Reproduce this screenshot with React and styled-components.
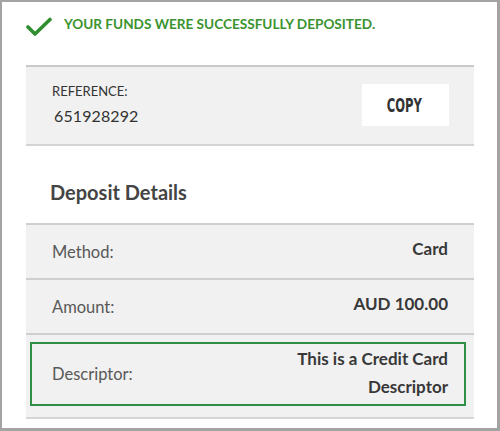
import React from 'react'
import styled, { createGlobalStyle } from 'styled-components'

const GlobalStyle = createGlobalStyle`
  html, body {
    margin: 0;
    padding: 0;
    background: #ffffff;
  }
  * { box-sizing: border-box; }
`

const details = [
    { label: 'Method:', value: 'Card' },
    { label: 'Amount:', value: 'AUD 100.00' },
]

const CheckIcon = () => (
    <svg width="26" height="20" viewBox="0 0 26 20">
        <path d="M2 10 L9 17 L24 2.5" fill="none" stroke="#2f8f2f" strokeWidth="3.6" strokeLinecap="round" strokeLinejoin="round" />
    </svg>
)

const App = () => {
    return (
        <>
            <GlobalStyle />
            <Frame>
                <Banner>
                    <CheckIcon />
                    <BannerText>YOUR FUNDS WERE SUCCESSFULLY DEPOSITED.</BannerText>
                </Banner>

                <ReferencePanel>
                    <ReferenceInfo>
                        <ReferenceLabel>REFERENCE:</ReferenceLabel>
                        <ReferenceNumber>651928292</ReferenceNumber>
                    </ReferenceInfo>
                    <CopyButton><span>COPY</span></CopyButton>
                </ReferencePanel>

                <SectionTitle>Deposit Details</SectionTitle>

                <DetailsTable>
                    {details.map(d => (
                        <DetailRow key={d.label}>
                            <DetailLabel>{d.label}</DetailLabel>
                            <DetailValue>{d.value}</DetailValue>
                        </DetailRow>
                    ))}
                    <DescriptorRow>
                        <HighlightBox>
                            <DetailLabel $multiline>Descriptor:</DetailLabel>
                            <DetailValue $multiline>This is a Credit Card<br />Descriptor</DetailValue>
                        </HighlightBox>
                    </DescriptorRow>
                </DetailsTable>
            </Frame>
        </>
    )
}

export default App

const Frame = styled.div`
    width: 500px;
    height: 431px;
    border-style: solid;
    border-color: #a3a3a3;
    border-width: 2px 3px 3px 2px;
    padding: 0 23px 0 24px;
    background: #ffffff;
    font-family: 'Lato', 'Open Sans', sans-serif;
    overflow: hidden;
`

const Banner = styled.div`
    height: 63px;
    display: flex;
    align-items: center;
    gap: 12px;
    padding-bottom: 20px;
    svg {
        margin-top: 6px;
    }
`

const BannerText = styled.span`
    color: #3b932f;
    font-size: 13.6px;
    font-weight: 700;
`

const ReferencePanel = styled.div`
    height: 81px;
    background: #f1f1f1;
    border-top: 2px solid #c9c9c9;
    border-bottom: 2px solid #d4d4d4;
    display: flex;
    align-items: center;
    justify-content: space-between;
    padding: 0 25px 0 26px;
`

const ReferenceInfo = styled.div`
    display: flex;
    flex-direction: column;
    gap: 7px;
    margin-top: -4px;
`

const ReferenceLabel = styled.span`
    font-size: 13px;
    color: #333;
`

const ReferenceNumber = styled.span`
    font-size: 16px;
    color: #333;
    padding-left: 2px;
    letter-spacing: 0.1px;
`

const CopyButton = styled.button`
    width: 87px;
    height: 42px;
    border: none;
    background: #ffffff;
    color: #333;
    font-family: 'DejaVu Sans Condensed', 'Liberation Sans Narrow', sans-serif;
    font-weight: 700;
    font-size: 20px;
    padding: 0;
    margin-top: -1px;
    display: flex;
    align-items: center;
    justify-content: center;
    span {
        display: inline-block;
        transform: scaleX(0.64);
        margin-left: -3px;
    }
`

const SectionTitle = styled.h2`
    margin: 0;
    height: 77px;
    display: flex;
    align-items: center;
    padding: 14px 0 0 24px;
    font-size: 20px;
    font-weight: 700;
    color: #444;
`

const DetailsTable = styled.div`
    border-top: 2px solid #cfcfcf;
`

const DetailRow = styled.div`
    height: 55px;
    background: #f1f1f1;
    border-bottom: 2px solid #cfcfcf;
    display: flex;
    align-items: center;
    justify-content: space-between;
    padding: 0 26px 0 26px;
`

const DescriptorRow = styled.div`
    background: #f1f1f1;
    border-bottom: 2px solid #d6d6d6;
    padding: 7px 8px 11px 4px;
`

const HighlightBox = styled.div`
    border: 2px solid #2f8f44;
    height: 64px;
    display: flex;
    align-items: center;
    justify-content: space-between;
    padding: 0 16px 0 20px;
`

const DetailLabel = styled.span`
    font-size: 16.5px;
    color: #585858;
    margin-top: ${p => (p.$multiline ? 0 : 0)}px;
`

const DetailValue = styled.span`
    font-size: 17px;
    font-weight: 700;
    color: #383838;
    text-align: right;
    line-height: ${p => (p.$multiline ? '28px' : 'normal')};
    margin-top: ${p => (p.$multiline ? -2 : -6)}px;
`
